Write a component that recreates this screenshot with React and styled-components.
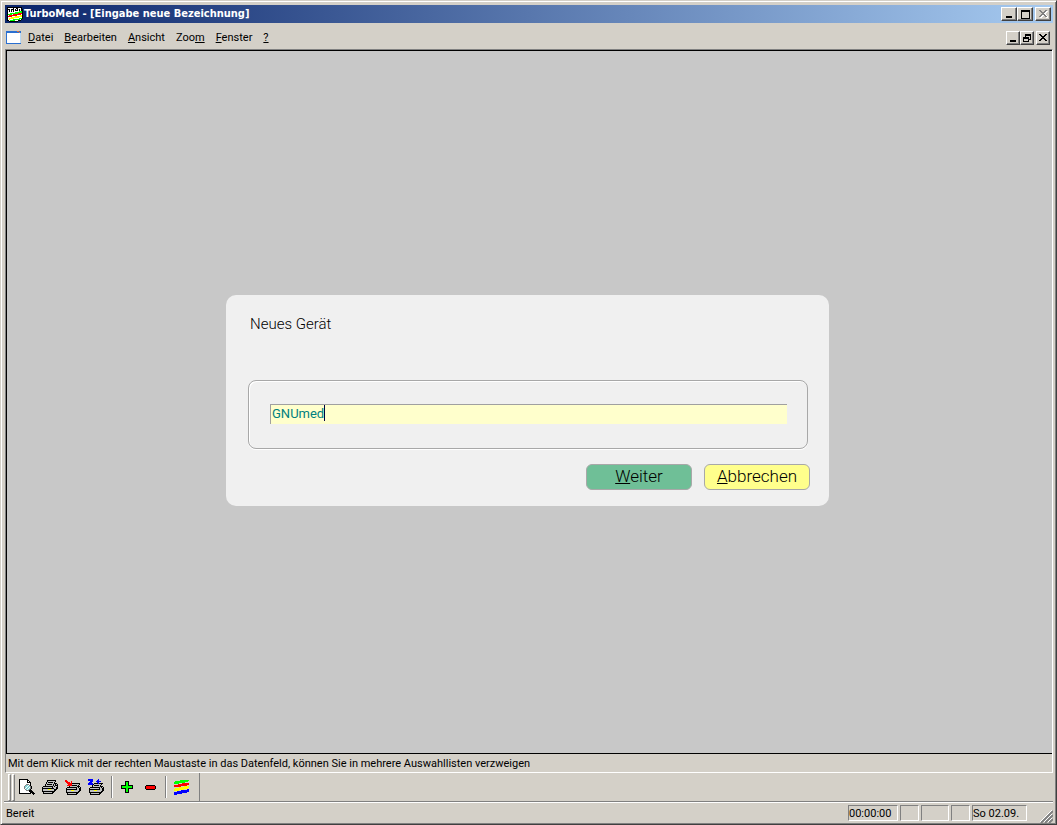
import React from "react";
import styled, { createGlobalStyle, css } from "styled-components";

const face = "#d4d0c8";
const shadow = "#808080";
const titleFont = '"DejaVu Sans Condensed", "DejaVu Sans", Tahoma, sans-serif';
const uiFont = 'Roboto, Tahoma, sans-serif';
const formFont = 'Roboto, "Liberation Sans", Arial, sans-serif';

const GlobalStyle = createGlobalStyle`
  * { box-sizing: border-box; }
  body { margin: 0; background: ${face}; }
  button, input { font: inherit; margin: 0; }
`;

const raised = css`
  border: 1px solid;
  border-color: #fff #404040 #404040 #fff;
  box-shadow: inset -1px -1px 0 ${shadow};
`;

const Window = styled.div`
  display: flex;
  flex-direction: column;
  min-height: 100vh;
  padding: 3px 3px 1px;
  background: ${face};
  border: 1px solid;
  border-color: ${face} #404040 #404040 ${face};
  box-shadow: inset 1px 1px 0 #fff, inset -1px -1px 0 ${shadow};
  color: #000;
  font: 11px/14px ${uiFont};
`;

const TitleBar = styled.header`
  display: flex;
  align-items: center;
  height: 18px;
  margin: 1px 0 0 1px;
  padding: 0 2px;
  background: linear-gradient(to right, #0a246a, #a6caf0);
`;

const Title = styled.h1`
  flex: 1;
  margin: 0 0 0 1px;
  color: #fff;
  font: bold 11px/16px ${titleFont};
`;

const MenuBar = styled.nav`
  display: flex;
  align-items: center;
  height: 26px;
  padding: 3px 3px 0 2px;
`;

const MenuList = styled.div`
  display: flex;
  flex: 1;
  padding-left: 1px;
`;

const MenuItem = styled.button`
  padding: 0 5px 0 6px;
  border: 0;
  background: none;
  color: inherit;
`;

const AccessKey = styled.span`
  text-decoration: underline;
  text-decoration-thickness: 1px;
  text-underline-offset: 1px;
`;

const Controls = styled.div`
  display: flex;
`;

const ControlButton = styled.button`
  display: grid;
  place-items: center;
  width: ${(p) => (p.$small ? 14 : 16)}px;
  height: 14px;
  margin-left: ${(p) => (p.$apart ? 2 : 0)}px;
  padding: 0;
  background: ${face};
  ${raised}
`;

const Client = styled.section`
  display: flex;
  flex: 1;
  flex-direction: column;
  margin-left: 1px;
  border: 1px solid;
  border-color: ${shadow} #fff #fff ${shadow};
`;

const Workspace = styled.main`
  display: flex;
  flex: 1;
  align-items: center;
  justify-content: center;
  padding: 0 4px 3px 0;
  background: #c8c8c8;
  border: solid #000;
  border-width: 1px 0 1px 1px;
`;

const Hint = styled.p`
  height: 18px;
  margin: 0;
  padding: 3px 2px 1px;
`;

const Dialog = styled.form`
  width: 603px;
  max-width: 100%;
  padding: 20px 19px 16px 22px;
  border-radius: 10px;
  background: #f0f0f0;
  font-family: ${formFont};
  font-weight: 300;
`;

const Heading = styled.label`
  display: block;
  padding-left: 2px;
  font-size: 15px;
  line-height: 18px;
`;

const Group = styled.div`
  margin: 47px 2px 15px 0;
  padding: 23px 20px 24px 21px;
  border: 1px solid #a8a8a8;
  border-radius: 8px;
  box-shadow: 0 1px 0 #fff, inset 1px 1px 0 #fff;
`;

const FieldBox = styled.div`
  position: relative;
`;

const Field = styled.input`
  display: block;
  width: 100%;
  height: 20px;
  padding: 0 0 2px 1px;
  border: solid #a0a0a0;
  border-width: 1px 0 0 1px;
  border-radius: 0;
  outline: 0;
  background: #ffffcc;
  color: #008080;
  caret-color: transparent;
  font-size: 13px;
  font-weight: 400;
`;

const Caret = styled.span`
  position: absolute;
  top: 1px;
  left: 54px;
  width: 1px;
  height: 16px;
  background: #000040;
`;

const Actions = styled.div`
  display: flex;
  justify-content: flex-end;
  gap: 12px;
`;

const ActionButton = styled.button`
  width: 106px;
  height: 26px;
  padding: 0 0 2px;
  border: 1px solid #a8a8a8;
  border-radius: 6px;
  background: ${(p) => (p.$primary ? "#6fbf97" : "#ffff8c")};
  color: #000;
  font-size: 17px;
  line-height: 22px;
`;

const ToolRow = styled.div`
  display: flex;
  height: 29px;
  padding-left: 4px;
  border-bottom: 1px solid ${shadow};
`;

const Tools = styled.div`
  display: flex;
  align-items: center;
  border-right: 1px solid ${shadow};
  padding-right: 6px;
`;

const Grip = styled.span`
  width: 3px;
  height: 27px;
  margin-right: 1px;
  border: 1px solid;
  border-color: #fff ${shadow} ${shadow} #fff;
`;

const ToolButton = styled.button`
  display: grid;
  place-items: center;
  width: 23px;
  height: 22px;
  padding: 0 1px 0 0;
  border: 0;
  background: none;
`;

const Separator = styled.span`
  width: 2px;
  height: 22px;
  margin: 0 3px;
  border-left: 1px solid ${shadow};
  border-right: 1px solid #fff;
`;

const StatusBar = styled.footer`
  display: flex;
  align-items: center;
  gap: 2px;
  height: 21px;
  padding: 0 0 0 2px;
  border-top: 1px solid #fff;
  line-height: 16px;
`;

const StatusText = styled.span`
  flex: 1;
  padding-top: 1px;
`;

const Cell = styled.span`
  width: ${(p) => p.$width}px;
  height: 16px;
  border: 1px solid;
  border-color: ${shadow} #fff #fff ${shadow};
  white-space: nowrap;
`;

const GripCorner = styled.svg`
  align-self: flex-end;
  margin-left: 11px;
`;

const palette = {
  k: "#000000",
  w: "#ffffff",
  g: "#808080",
  l: "#c0c0c0",
  c: "#7fd4d8",
  y: "#ffff00",
  r: "#ff0000",
  n: "#00ff00",
  b: "#0000ff",
  s: "#2a6fd0",
  o: "#e07038",
  t: "#b8d8f4",
};

function PixelIcon({ rows }) {
  const width = Math.max(...rows.map((row) => row.length));
  const runs = [];
  rows.forEach((row, y) => {
    for (let x = 0; x < row.length; ) {
      const ch = row[x];
      let end = x + 1;
      while (row[end] === ch) end += 1;
      if (palette[ch]) runs.push({ x, y, w: end - x, fill: palette[ch] });
      x = end;
    }
  });
  return (
    <svg
      width={width}
      height={rows.length}
      viewBox={`0 0 ${width} ${rows.length}`}
      shapeRendering="crispEdges"
      aria-hidden="true"
    >
      {runs.map((r) => (
        <rect key={`${r.x}-${r.y}`} x={r.x} y={r.y} width={r.w} height="1" fill={r.fill} />
      ))}
    </svg>
  );
}

const icons = {
  app: [
    "kkkkkkkkkkkkkkk.",
    "kwwwwwkwwkkwwwk.",
    "kkkwkkkwkwkwkwkk",
    "kwkwkwkwkkkwkwkk",
    "kwkwkwkwwwwwnnnk",
    "kwwwwwwwnnnnnnnk",
    "kwwnnnnnnnnrrrrk",
    "knnnnwrrrrrrrrwk",
    "kwrrrrrrrrwwwyyk",
    "krrrrwwwyyyyyyyk",
    "kwwwyyyyyyyywwwk",
    "kwyyyyywwwwwnnnk",
    "kwywwwnnnnnnnwk.",
    "kkwnnnnnwwwkkk..",
    "..kkkkkkkkk.....",
  ],
  document: [
    "sssssssssssooss",
    "sssssssssssssos",
    "swwwwwwwwwwwwwt",
    "swwwwwwwwwwwwwt",
    "swwwwwwwwwwwwwt",
    "swwwwwwwwwwwwwt",
    "swwwwwwwwwwwwwt",
    "swwwwwwwwwwwwwt",
    "swwwwwwwwwwwwwt",
    "swwwwwwwwwwwwwt",
    "swwwwwwwwwwwwwt",
    "swwwwwwwwwwwwwt",
    "sssssssssssssss",
  ],
  preview: [
    "kkkkkkkkk.......",
    "kwwwwwwwkk......",
    "kwwwwwwwkwk.....",
    "kwwwwwwwkkkk....",
    "kwwwwwwwwwwk....",
    "kwwwwwwgggwk....",
    "kwwwwwgccwgk....",
    "kwwwwgccwccgk...",
    "kwwwwgcwccwgk...",
    "kwwwwgwccwcgk...",
    "kwwwwwgcwcgk....",
    "kwwwwwwgggkkk...",
    "kwwwwwwwwwkkkk..",
    "kwwwwwwwwwwkkkk.",
    "kkkkkkkkkkkk.kkk",
    "..............k.",
  ],
  printer: [
    ".....kkkkkkkkk..",
    ".....klllllllk..",
    "....klkkkkklk...",
    "....klllllllkkk.",
    "...klkkkkklklklk",
    "...klllllllklkkk",
    ".kkkkkkkkkklkllk",
    "klllllllllklllkk",
    "kkkkkkkkkkkkllkk",
    "klllllyyylllkkk.",
    "klllllllllllkk..",
    "kkkkkkkkkkkkk...",
    ".kllllllllkk....",
    ".kkkkkkkkkk.....",
  ],
  printTo: [
    "rr..............",
    "rrr...r.........",
    ".rrrr.r.........",
    "..rrrrrkkkkkkkk.",
    "...rrrrlllllllk.",
    "..rrrrrkkkkklk..",
    "....klllllllkkk.",
    "..kkkkkkkkkklklk",
    ".klllllllllkllkk",
    ".kkkkkkkkkkkllkk",
    ".kllllyyylllllkk",
    ".klllllllllllkk.",
    ".kkkkkkkkkkkkk..",
    "..kllllllllkk...",
    "..kkkkkkkkkk....",
  ],
  printLater: [
    "bbbbb.....b.....",
    "bbbbb....bb.....",
    "..bbb...bbbbb...",
    ".bbb.....bb.....",
    "bbbbb.kkkkbkkkk.",
    "bbbbbklllllllk..",
    "....klkkkkklk...",
    "....klllllllkkk.",
    "..kkkkkkkkkklklk",
    ".klllllllllkllkk",
    ".kkkkkkkkkkkllkk",
    ".kllllyyylllllkk",
    ".klllllllllllkk.",
    ".kkkkkkkkkkkkk..",
    "..kllllllllkk...",
    "..kkkkkkkkkk....",
  ],
  plus: [
    "....kkkk....",
    "....knnk....",
    "....knnk....",
    "....knnk....",
    "kkkkknnkkkkk",
    "knnnnnnnnnnk",
    "knnnnnnnnnnk",
    "kkkkknnkkkkk",
    "....knnk....",
    "....knnk....",
    "....knnk....",
    "....kkkk....",
  ],
  minus: [
    ".kkkkkkkkk.",
    "krrrrrrrrrk",
    "krrrrrrrrrk",
    "krrrrrrrrrk",
    ".kkkkkkkkk.",
  ],
  stripes: [
    "......nnnnnnnnn",
    ".nnnnnnnnnnnnn.",
    "nnnnnnnnnnn....",
    "nnnnn...rrrrrrr",
    "....rrrrrrrrrrr",
    "rrrrrrrrrrrrr..",
    "rrrrrrr...yyyyy",
    ".....yyyyyyyyyy",
    ".yyyyyyyyyyyyy.",
    "yyyyyyyyyy...bb",
    "yyyyy..bbbbbbbb",
    "...bbbbbbbbbbbb",
    "bbbbbbbbbbbbb..",
    "bbbbbbbb.......",
    "bbb............",
  ],
  minimize: [
    "......",
    "......",
    "......",
    "......",
    "......",
    "......",
    "kkkkkk",
    "kkkkkk",
  ],
  maximize: [
    "kkkkkkkkk",
    "kkkkkkkkk",
    "k.......k",
    "k.......k",
    "k.......k",
    "k.......k",
    "k.......k",
    "k.......k",
    "kkkkkkkkk",
  ],
  restore: [
    "..kkkkkk",
    "..kkkkkk",
    "..k....k",
    "kkkkkk.k",
    "kkkkkk.k",
    "k....kkk",
    "k....k..",
    "kkkkkk..",
  ],
  close: [
    "kk....kk",
    ".kk..kk.",
    "..kkkk..",
    "...kk...",
    "..kkkk..",
    ".kk..kk.",
    "kk....kk",
  ],
  closeDisabled: [
    "gg....gg.",
    ".gg..ggww",
    "..ggggww.",
    "...ggww..",
    "..ggggw..",
    ".ggwwggw.",
    "ggww..ggw",
    ".ww....ww",
  ],
};

const menus = [
  ["", "D", "atei"],
  ["", "B", "earbeiten"],
  ["", "A", "nsicht"],
  ["Zoo", "m", ""],
  ["", "F", "enster"],
  ["", "?", ""],
];

const tools = [
  ["preview", "Seitenansicht"],
  ["printer", "Drucken"],
  ["printTo", "Drucken auf"],
  ["printLater", "Später drucken"],
  null,
  ["plus", "Hinzufügen"],
  ["minus", "Entfernen"],
  null,
  ["stripes", "TurboMed"],
];

export default function App() {
  return (
    <>
      <GlobalStyle />
      <Window>
        <TitleBar>
          <PixelIcon rows={icons.app} />
          <Title>TurboMed - [Eingabe neue Bezeichnung]</Title>
          <Controls>
            <ControlButton aria-label="Minimieren">
              <PixelIcon rows={icons.minimize} />
            </ControlButton>
            <ControlButton aria-label="Maximieren">
              <PixelIcon rows={icons.maximize} />
            </ControlButton>
            <ControlButton $apart disabled aria-label="Schließen">
              <PixelIcon rows={icons.closeDisabled} />
            </ControlButton>
          </Controls>
        </TitleBar>
        <MenuBar>
          <PixelIcon rows={icons.document} />
          <MenuList>
            {menus.map(([before, key, after]) => (
              <MenuItem key={before + key + after}>
                {before}
                <AccessKey>{key}</AccessKey>
                {after}
              </MenuItem>
            ))}
          </MenuList>
          <Controls>
            <ControlButton $small aria-label="Fenster minimieren">
              <PixelIcon rows={icons.minimize} />
            </ControlButton>
            <ControlButton $small aria-label="Fenster wiederherstellen">
              <PixelIcon rows={icons.restore} />
            </ControlButton>
            <ControlButton $small $apart aria-label="Fenster schließen">
              <PixelIcon rows={icons.close} />
            </ControlButton>
          </Controls>
        </MenuBar>
        <Client>
          <Workspace>
            <Dialog onSubmit={(e) => e.preventDefault()}>
              <Heading htmlFor="device">Neues Gerät</Heading>
              <Group>
                <FieldBox>
                  <Field id="device" defaultValue="GNUmed" />
                  <Caret />
                </FieldBox>
              </Group>
              <Actions>
                <ActionButton type="submit" $primary>
                  <AccessKey>W</AccessKey>eiter
                </ActionButton>
                <ActionButton type="button">
                  <AccessKey>A</AccessKey>bbrechen
                </ActionButton>
              </Actions>
            </Dialog>
          </Workspace>
          <Hint>
            Mit dem Klick mit der rechten Maustaste in das Datenfeld, können Sie in mehrere
            Auswahllisten verzweigen
          </Hint>
        </Client>
        <ToolRow>
          <Tools>
            <Grip />
            <Grip />
            {tools.map((tool, i) =>
              tool ? (
                <ToolButton key={tool[0]} aria-label={tool[1]}>
                  <PixelIcon rows={icons[tool[0]]} />
                </ToolButton>
              ) : (
                <Separator key={i} />
              )
            )}
          </Tools>
        </ToolRow>
        <StatusBar>
          <StatusText>Bereit</StatusText>
          <Cell $width={50}>00:00:00</Cell>
          <Cell $width={19} />
          <Cell $width={28} />
          <Cell $width={19} />
          <Cell $width={55}>So 02.09.</Cell>
          <GripCorner width="13" height="13" viewBox="0 0 13 13" aria-hidden="true">
            <path d="M1 13 13 1M5 13 13 5M9 13 13 9" stroke="#808080" strokeWidth="2" />
            <path d="M0 12 12 0M4 12 12 4M8 12 12 8" stroke="#ffffff" />
          </GripCorner>
        </StatusBar>
      </Window>
    </>
  );
}
